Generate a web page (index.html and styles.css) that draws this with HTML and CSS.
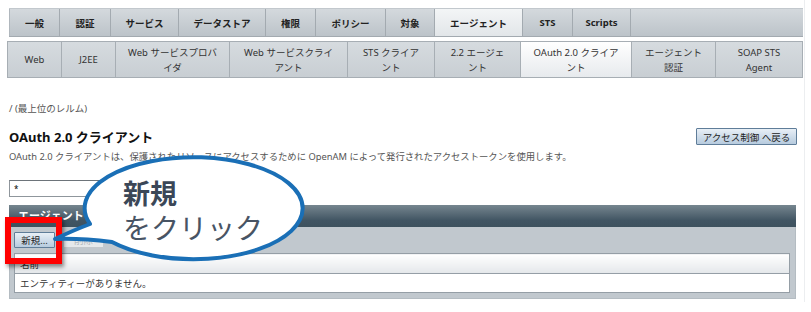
FILE: index.html
```html
<!DOCTYPE html>
<html lang="ja">
<head>
<meta charset="utf-8">
<title>OAuth 2.0 クライアント</title>
<link rel="stylesheet" href="styles.css">
</head>
<body>
<div class="page">
  <nav class="tabs">
    <a class="tab w50">一般</a>
    <a class="tab w51">認証</a>
    <a class="tab w68">サービス</a>
    <a class="tab w87">データストア</a>
    <a class="tab w50">権限</a>
    <a class="tab w70">ポリシー</a>
    <a class="tab w49">対象</a>
    <a class="tab w88 sel">エージェント</a>
    <a class="tab w50">STS</a>
    <a class="tab w58">Scripts</a>
    <span class="tab-fill"></span>
  </nav>
  <nav class="subtabs">
    <a class="sub s53">Web</a>
    <a class="sub s54">J2EE</a>
    <a class="sub s114">Web サービスプロバ<br>イダ</a>
    <a class="sub s118">Web サービスクライ<br>アント</a>
    <a class="sub s87">STS クライア<br>ント</a>
    <a class="sub s86">2.2 エージェ<br>ント</a>
    <a class="sub s111 sel">OAuth 2.0 クライア<br>ント</a>
    <a class="sub s84">エージェント<br>認証</a>
    <a class="sub s87b">SOAP STS<br>Agent</a>
  </nav>
  <main class="content">
    <div class="crumb">/ (最上位のレルム)</div>
    <div class="title-row">
      <h1 class="title">OAuth 2.0 クライアント</h1>
      <button class="btn back">アクセス制御 へ戻る</button>
    </div>
    <p class="desc">OAuth 2.0 クライアントは、保護されたリソースにアクセスするために OpenAM によって発行されたアクセストークンを使用します。</p>
    <input class="filter" type="text" value="*">
    <section class="panel">
      <div class="panel-head"><span>エージェント</span></div>
      <div class="panel-body">
        <div class="actions">
          <button class="btn small">新規...</button>
          <button class="btn small off" disabled>削除</button>
        </div>
        <table class="grid">
          <thead><tr><th>名前</th></tr></thead>
          <tbody><tr><td>エンティティーがありません。</td></tr></tbody>
        </table>
      </div>
    </section>
  </main>
  <div class="redbox"></div>
  <div class="callout">
    <svg class="bubble" width="280" height="120" viewBox="0 0 280 120">
      <path d="M50 74 A109 51 0 1 1 72 92 Q40 88 15 89 Q34 80 50 74 Z" fill="#fff" stroke="#1a6fb6" stroke-width="4" stroke-linejoin="round"/>
    </svg>
    <div class="callout-text"><b>新規</b><br>をクリック</div>
  </div>
</div>
</body>
</html>
```
FILE: styles.css
```css
* { box-sizing: border-box; }
html, body { margin: 0; padding: 0; background: #fff; }
body {
  font-family: "Noto Sans", "Noto Sans CJK JP", sans-serif;
  font-size: 9.5px;
  color: #333;
}
.page {
  position: relative;
  width: 805px;
  height: 302px;
  padding: 8px 1px 0 9px;
  border-right: 1px solid #eceef0;
}

/* top tabs */
.tabs {
  display: flex;
  height: 29px;
  background: linear-gradient(#d4d9dd, #bcc3c9);
  border-top: 1px solid #c2c8cd;
  border-bottom: 1px solid #a3aab0;
}
.tab {
  display: flex;
  align-items: center;
  justify-content: center;
  font-weight: bold;
  color: #222;
  border-left: 1px solid #a3aab0;
}
.tab:first-child { border-left: 1px solid #b0b7bd; }
.tab.sel { background: linear-gradient(#f3f5f6, #e2e6e9); }
.tab-fill { flex: 1; border-left: 1px solid #a3aab0; }
.w49 { width: 49px; } .w50 { width: 50px; } .w51 { width: 51px; }
.w58 { width: 58px; } .w68 { width: 68px; } .w70 { width: 70px; }
.w87 { width: 87px; } .w88 { width: 88px; }

/* sub tabs */
.subtabs {
  display: flex;
  height: 37px;
  margin-top: 4px;
  margin-left: -2px;
  background: #fff;
}
.sub {
  display: flex;
  align-items: center;
  justify-content: center;
  text-align: center;
  line-height: 15px;
  color: #333;
  background: linear-gradient(#d6dbdf, #c8ced3);
  border: 1px solid #a7aeb4;
  border-left: none;
}
.sub:first-child { border-left: 1px solid #a7aeb4; }
.sub.sel { background: linear-gradient(#ffffff, #e7eaed); }
.s53 { width: 55px; } .s54 { width: 54px; } .s114 { width: 114px; }
.s118 { width: 118px; } .s87 { width: 87px; } .s86 { width: 86px; }
.s111 { width: 111px; } .s84 { width: 84px; } .s87b { width: 87px; }

/* content */
.content { padding-right: 7px; }
.crumb { margin-top: 24px; line-height: 14px; color: #555; }
.title-row {
  display: flex;
  align-items: center;
  justify-content: space-between;
  height: 17px;
  margin-top: 12px;
}
.title { margin: 0; font-size: 13px; font-weight: bold; color: #111; line-height: 16px; }
.desc { margin: 5px 0 0; line-height: 14px; color: #555; font-size: 9.35px; }

.btn {
  font-family: inherit;
  font-size: 9.5px;
  color: #222;
  padding: 0 6px;
  border: 1px solid #5f7d99;
  border-radius: 1px;
  background: linear-gradient(#e8eff6, #b7cbde);
  cursor: pointer;
  white-space: nowrap;
}
.back { height: 17px; width: 101px; margin-right: -1px; padding: 0 2px; }

.filter {
  display: block;
  margin-top: 16px;
  width: 150px;
  height: 17px;
  padding: 0 4px;
  font-family: inherit;
  font-size: 8px;
  border: 1px solid #8f969c;
  border-top-color: #6d747a;
  background: #fff;
}

.panel { margin-top: 8px; }
.panel-head {
  height: 22px;
  line-height: 22px;
  padding-left: 9px;
  font-size: 11px;
  font-weight: bold;
  color: #fff;
  background: linear-gradient(#76868f, #415563 70%, #3d515e);
}
.panel-body {
  background: #c1c8ce;
  padding: 5px 5px 5px 4px;
  border: 1px solid #b4bcc2;
  border-top: none;
}
.actions { display: flex; gap: 8px; height: 16px; margin-bottom: 5px; }
.btn.small { height: 16px; width: 41px; padding: 0; }
.btn.off {
  color: #b4b9bd;
  border-color: #c3c8cc;
  background: #e6e9eb;
  width: 41px;
}
.grid {
  width: 100%;
  border-collapse: collapse;
  background: #fff;
  border: 1px solid #959ea6;
}
.grid th {
  height: 20px;
  padding: 0 5px;
  text-align: left;
  font-weight: normal;
  color: #333;
  background: linear-gradient(#ffffff, #e4e7ea);
  border-bottom: 1px solid #959ea6;
}
.grid td { height: 19px; padding: 0 5px; color: #333; }

/* annotation overlays */
.redbox {
  position: absolute;
  left: 5px;
  top: 217px;
  width: 57px;
  height: 47px;
  border: 6px solid #ff0000;
  box-shadow: 2px 3px 4px rgba(0, 0, 0, 0.45);
}
.callout {
  position: absolute;
  left: 40px;
  top: 150px;
  width: 280px;
  height: 120px;
}
.bubble { display: block; }
.callout-text {
  position: absolute;
  left: 83px;
  top: 25px;
  font-family: "Noto Sans CJK JP", sans-serif;
  font-size: 28px;
  line-height: 34px;
  color: #485464;
  white-space: nowrap;
}
.callout-text b { font-size: 27px; font-weight: bold; color: #3b4757; }
```
